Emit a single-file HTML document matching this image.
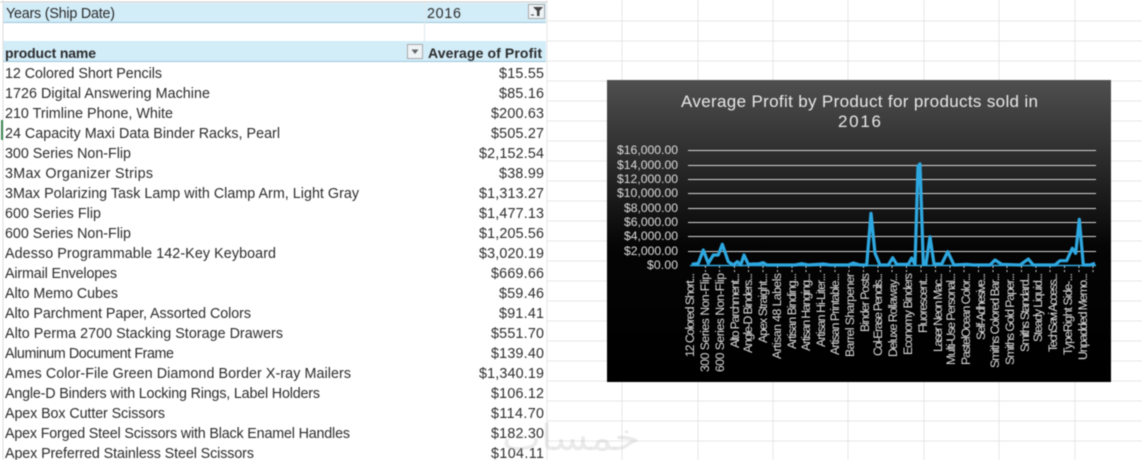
<!DOCTYPE html>
<html><head><meta charset="utf-8"><style>
html,body{margin:0;padding:0;background:#fff;width:1142px;height:460px;overflow:hidden}
svg{display:block;filter:blur(.45px)}
text{font-family:"Liberation Sans",sans-serif}
.r{font-size:14.3px;fill:#2c2c2c}
.v{font-size:14.3px;fill:#2c2c2c;text-anchor:start}
.y{font-size:12.2px;fill:#dedede}
.l{font-size:12.2px;fill:#dcdcdc}
</style></head><body>
<svg width="1142" height="460" viewBox="0 0 1142 460" xmlns="http://www.w3.org/2000/svg">
<defs><linearGradient id="g" x1="0" y1="0" x2="0" y2="1"><stop offset="0" stop-color="#4f4f4f"/><stop offset=".55" stop-color="#050505"/><stop offset="1" stop-color="#000"/></linearGradient></defs>
<rect width="1142" height="460" fill="#fff"/>
<g stroke="#e6e6e6" stroke-width="1" fill="none">
<path d="M547 21H1142M547 41H1142M547 61H1142M547 81H1142M547 101H1142M547 121H1142M547 141H1142M547 161H1142M547 181H1142M547 201H1142M547 221H1142M547 241H1142M547 261H1142M547 281H1142M547 301H1142M547 321H1142M547 341H1142M547 361H1142M547 381H1142M547 401H1142M547 421H1142M547 441H1142"/>
<path d="M547 0V460M622 0V460M698 0V460M773 0V460M848 0V460M924 0V460M999 0V460M1075 0V460"/>
</g>
<path d="M0 2H547" stroke="#c9c9c9"/>
<rect x="3" y="3" width="543" height="19" fill="#d2ecf8"/>
<path d="M3 22.500H546" stroke="#9cc6d8"/>
<rect x="3" y="41" width="543" height="20" fill="#d2ecf8"/>
<path d="M3 61.500H546" stroke="#9cc6d8"/>
<path d="M424.500 3V41" stroke="#dfe8ec"/>
<path d="M3 0V460" stroke="#dcdcdc"/>
<rect x="1" y="120" width="2" height="20" fill="#3f8a55"/>
<text x="6" y="18" font-size="14.300" fill="#2c2c2c" textLength="109" lengthAdjust="spacing">Years (Ship Date)</text>
<text x="427" y="18" font-size="14.300" fill="#2c2c2c" textLength="34" lengthAdjust="spacing">2016</text>
<rect x="528.500" y="4.500" width="16" height="14" fill="#eef3f6" stroke="#a8a8a8"/>
<path d="M533 7H543L539.500 11V16H537V11Z" fill="#444"/><path d="M531 15H534" stroke="#444"/>
<text x="5" y="58" font-size="14" font-weight="700" fill="#2c2c2c" textLength="91" lengthAdjust="spacing">product name</text>
<rect x="407.500" y="44.500" width="15" height="14" fill="#eef3f6" stroke="#a8a8a8"/>
<path d="M411.500 49.500H418.500L415 54Z" fill="#666"/>
<text x="428" y="58" font-size="14" font-weight="700" fill="#2c2c2c" textLength="114" lengthAdjust="spacing">Average of Profit</text>

<g class="rows">
<text class="r" x="5" y="78" textLength="157">12 Colored Short Pencils</text>
<text class="r" x="5" y="98" textLength="205">1726 Digital Answering Machine</text>
<text class="r" x="5" y="118" textLength="168">210 Trimline Phone, White</text>
<text class="r" x="5" y="138" textLength="275">24 Capacity Maxi Data Binder Racks, Pearl</text>
<text class="r" x="5" y="158" textLength="126">300 Series Non-Flip</text>
<text class="r" x="5" y="178" textLength="148">3Max Organizer Strips</text>
<text class="r" x="5" y="198" textLength="354">3Max Polarizing Task Lamp with Clamp Arm, Light Gray</text>
<text class="r" x="5" y="218" textLength="96">600 Series Flip</text>
<text class="r" x="5" y="238" textLength="126">600 Series Non-Flip</text>
<text class="r" x="5" y="258" textLength="271">Adesso Programmable 142-Key Keyboard</text>
<text class="r" x="5" y="278" textLength="112">Airmail Envelopes</text>
<text class="r" x="5" y="298" textLength="113">Alto Memo Cubes</text>
<text class="r" x="5" y="318" textLength="246">Alto Parchment Paper, Assorted Colors</text>
<text class="r" x="5" y="338" textLength="278">Alto Perma 2700 Stacking Storage Drawers</text>
<text class="r" x="5" y="358" textLength="169">Aluminum Document Frame</text>
<text class="r" x="5" y="378" textLength="346">Ames Color-File Green Diamond Border X-ray Mailers</text>
<text class="r" x="5" y="398" textLength="315">Angle-D Binders with Locking Rings, Label Holders</text>
<text class="r" x="5" y="418" textLength="160">Apex Box Cutter Scissors</text>
<text class="r" x="5" y="438" textLength="345">Apex Forged Steel Scissors with Black Enamel Handles</text>
<text class="r" x="5" y="458" textLength="249">Apex Preferred Stainless Steel Scissors</text>
</g>
<g>
<text class="v" x="499" y="78" textLength="45">$15.55</text>
<text class="v" x="499" y="98" textLength="45">$85.16</text>
<text class="v" x="491" y="118" textLength="53">$200.63</text>
<text class="v" x="491" y="138" textLength="53">$505.27</text>
<text class="v" x="479" y="158" textLength="65">$2,152.54</text>
<text class="v" x="499" y="178" textLength="45">$38.99</text>
<text class="v" x="479" y="198" textLength="65">$1,313.27</text>
<text class="v" x="479" y="218" textLength="65">$1,477.13</text>
<text class="v" x="479" y="238" textLength="65">$1,205.56</text>
<text class="v" x="479" y="258" textLength="65">$3,020.19</text>
<text class="v" x="491" y="278" textLength="53">$669.66</text>
<text class="v" x="499" y="298" textLength="45">$59.46</text>
<text class="v" x="499" y="318" textLength="45">$91.41</text>
<text class="v" x="491" y="338" textLength="53">$551.70</text>
<text class="v" x="491" y="358" textLength="53">$139.40</text>
<text class="v" x="479" y="378" textLength="65">$1,340.19</text>
<text class="v" x="491" y="398" textLength="53">$106.12</text>
<text class="v" x="491" y="418" textLength="53">$114.70</text>
<text class="v" x="491" y="438" textLength="53">$182.30</text>
<text class="v" x="491" y="458" textLength="53">$104.11</text>
</g>

<rect x="607" y="80" width="504" height="302" fill="url(#g)"/>
<text x="681" y="107" font-size="17" fill="#e8e8e8" textLength="357" lengthAdjust="spacing">Average Profit by Product for products sold in</text>
<text x="838" y="127" font-size="17" fill="#e8e8e8" textLength="43" lengthAdjust="spacing">2016</text>
<g stroke="#d6d6d6" stroke-width="1">
<path d="M688 150.500H1096M688 165.500H1096M688 179.500H1096M688 193.500H1096M688 208.500H1096M688 222.500H1096M688 236.500H1096M688 251.500H1096"/>
</g>
<g>
<text class="y" x="617" y="154" textLength="61">$16,000.00</text>
<text class="y" x="617" y="169" textLength="61">$14,000.00</text>
<text class="y" x="617" y="183" textLength="61">$12,000.00</text>
<text class="y" x="617" y="197" textLength="61">$10,000.00</text>
<text class="y" x="624" y="212" textLength="54">$8,000.00</text>
<text class="y" x="624" y="226" textLength="54">$6,000.00</text>
<text class="y" x="624" y="240" textLength="54">$4,000.00</text>
<text class="y" x="624" y="255" textLength="54">$2,000.00</text>
<text class="y" x="647" y="269" textLength="31">$0.00</text>
</g>
<path d="M690 265.500H1096" stroke="#2ea6dc" stroke-width="1.500"/>
<path d="M705.500 266V272M719.500 266V272M734.500 266V272M748.500 266V272M763 266V272M777.500 266V272M792 266V272M806 266V272M820.500 266V272M835 266V272M849 266V272M863.500 266V272M878 266V272M892 266V272M906.500 266V272M921 266V272M935.500 266V272M950 266V272M964 266V272M978.500 266V272M993 266V272M1007 266V272M1021.500 266V272M1036 266V272M1050 266V272M1064.500 266V272M1079 266V272M1093 266V272" stroke="#ccc" stroke-dasharray="2 2"/>
<g fill="none" stroke="#2ea8e0" stroke-width="3.200" stroke-linejoin="round">
<polyline points="691.700,264.300 698.300,263.300 703.300,250 708.300,263.300 713.300,255 718.300,255 722.300,244.300 728.300,261.700 733.300,265 737.300,261.700 740.700,265 744,255 748.300,264.300 753.300,264 758.300,264 763.300,262.700 766.700,265 795,265 801.700,263.700 808.300,265 823.300,264 830,265 848.300,265 853.300,263 860,265 866.700,265 871,213.300 875,253.300 880,265 888.300,265 892.700,257.700 896.700,264.300 908.300,264.300 911.700,258 915,264.300 918,166 920,164 923.300,264 926,264 930,236.700 934,264 941.700,264 947.700,251.700 954,265 966.700,264.300 973.300,265 990,265 995,260 1001.700,264.300 1020,265 1028.300,259 1033.300,265 1055,265 1060,260.700 1066.700,260.700 1072.300,248.300 1075.700,253.300 1079.300,219.300 1083.300,265 1090,265 1095,263.300"/>
</g>
<g class="l">
<text transform="translate(694,273) rotate(-90)" text-anchor="end" x="0" y="0" textLength="84">12 Colored Short...</text>
<text transform="translate(709,273) rotate(-90)" text-anchor="end" textLength="99">300 Series Non-Flip</text>
<text transform="translate(724,273) rotate(-90)" text-anchor="end" textLength="99">600 Series Non-Flip</text>
<text transform="translate(739,273) rotate(-90)" text-anchor="end" textLength="75">Alto Parchment...</text>
<text transform="translate(752,273) rotate(-90)" text-anchor="end" textLength="80">Angle-D Binders...</text>
<text transform="translate(767,273) rotate(-90)" text-anchor="end" textLength="70">Apex Straight...</text>
<text transform="translate(781,273) rotate(-90)" text-anchor="end" textLength="86">Artisan 48 Labels</text>
<text transform="translate(796,273) rotate(-90)" text-anchor="end" textLength="76">Artisan Binding...</text>
<text transform="translate(810,273) rotate(-90)" text-anchor="end" textLength="78">Artisan Hanging...</text>
<text transform="translate(825,273) rotate(-90)" text-anchor="end" textLength="74">Artisan Hi-Liter...</text>
<text transform="translate(839,273) rotate(-90)" text-anchor="end" textLength="82">Artisan Printable...</text>
<text transform="translate(854,273) rotate(-90)" text-anchor="end" textLength="84">Barrel Sharpener</text>
<text transform="translate(869,273) rotate(-90)" text-anchor="end" textLength="59">Binder Posts</text>
<text transform="translate(882,273) rotate(-90)" text-anchor="end" textLength="83">Col-Erase Pencils...</text>
<text transform="translate(897,273) rotate(-90)" text-anchor="end" textLength="84">Deluxe Rollaway...</text>
<text transform="translate(912,273) rotate(-90)" text-anchor="end" textLength="82">Economy Binders</text>
<text transform="translate(927,273) rotate(-90)" text-anchor="end" textLength="60">Fluorescent...</text>
<text transform="translate(942,273) rotate(-90)" text-anchor="end" textLength="79">Laser Neon Mac...</text>
<text transform="translate(955,273) rotate(-90)" text-anchor="end" textLength="92">Multi-Use Personal...</text>
<text transform="translate(970,273) rotate(-90)" text-anchor="end" textLength="92">PastelOcean Color...</text>
<text transform="translate(985,273) rotate(-90)" text-anchor="end" textLength="67">Self-Adhesive...</text>
<text transform="translate(999,273) rotate(-90)" text-anchor="end" textLength="95">Smiths Colored Bar...</text>
<text transform="translate(1014,273) rotate(-90)" text-anchor="end" textLength="92">Smiths Gold Paper...</text>
<text transform="translate(1029,273) rotate(-90)" text-anchor="end" textLength="79">Smiths Standard...</text>
<text transform="translate(1042,273) rotate(-90)" text-anchor="end" textLength="69">Steady Liquid...</text>
<text transform="translate(1057,273) rotate(-90)" text-anchor="end" textLength="79">TechSavi Access...</text>
<text transform="translate(1072,273) rotate(-90)" text-anchor="end" textLength="82">TypeRight Side-...</text>
<text transform="translate(1087,273) rotate(-90)" text-anchor="end" textLength="87">Unpadded Memo...</text>
</g>
<text x="502" y="450" font-size="36" fill="#bbb" fill-opacity=".3" style="font-family:'DejaVu Sans',sans-serif" textLength="138" lengthAdjust="spacingAndGlyphs">خمسات</text>
</svg>
</body></html>
